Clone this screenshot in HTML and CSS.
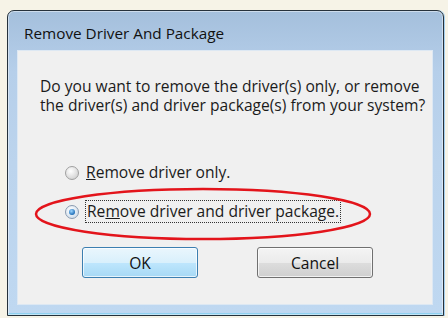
FILE: index.html
```html
<!DOCTYPE html>
<html lang="en">
<head>
  <meta charset="UTF-8">
  <title>Remove Driver And Package</title>
  <link rel="stylesheet" href="styles.css">
</head>
<body>

  <!-- Dialog window -->
  <div class="window">
    <div class="titlebar">Remove Driver And Package</div>

    <div class="client">
      <p class="question">Do you want to remove the driver(s) only, or remove the driver(s) and driver package(s) from your system?</p>

      <div class="options">
        <label class="option">
          <span class="radio"></span>
          <span class="label"><u>R</u>emove driver only.</span>
        </label>
        <label class="option">
          <span class="radio checked"></span>
          <span class="label focus">Re<u>m</u>ove driver and driver package.</span>
        </label>
      </div>

      <div class="buttons">
        <button class="btn default">OK</button>
        <button class="btn">Cancel</button>
      </div>

      <!-- red annotation around the second option -->
      <svg class="mark" width="414" height="252" viewBox="0 0 414 252">
        <ellipse cx="185" cy="163" rx="167" ry="25" fill="none" stroke="#e3141b" stroke-width="2.5"/>
      </svg>
    </div>
  </div>

</body>
</html>
```

FILE: styles.css
```css
body {
  margin: 0;
  padding: 10px 0 0 7px;
  background: #f6f3e7;
  font-family: 'Open Sans', 'Noto Sans', sans-serif;
  color: #1b1b1b;
}

.window {
  box-sizing: border-box;
  width: 437px;
  height: 306px;
  border: 1px solid #26313b;
  border-radius: 7px 7px 0 0;
  background: linear-gradient(#a4bfdc, #b6cfea 20%, #bcd4ed 50%, #bfd8f1);
  box-shadow: inset 0 0 0 1px rgba(255, 255, 255, 0.45), inset 0 -2px 0 #8fd0ef, 1px 0 0 #a6d0f0;
  padding: 0 11px 11px 10px;
  display: flex;
  flex-direction: column;
}

.titlebar {
  box-sizing: border-box;
  height: 40px;
  padding: 5px 0 0 6px;
  line-height: 35px;
  font-size: 15.3px;
  color: #111;
}

.client {
  position: relative;
  flex: 1;
  background: #f0f0f0;
  box-shadow: 0 0 0 1px #dde8f3;
  padding: 0 0 0 22px;
}

.question {
  margin: 26px 0 0;
  font-size: 15.6px;
  line-height: 19px;
  width: 392px;
}

.options {
  margin-top: 47px;
  padding-left: 25px;
  display: flex;
  flex-direction: column;
  gap: 18px;
}

.option {
  display: flex;
  align-items: center;
  gap: 7px;
  font-size: 15.6px;
  height: 21px;
}

.radio {
  box-sizing: border-box;
  flex: none;
  width: 14px;
  height: 14px;
  border-radius: 50%;
  border: 1px solid #a0a0a0;
  background: radial-gradient(circle at 40% 35%, #ffffff, #d8d8d8 70%, #c4c4c4);
  position: relative;
}

.radio.checked {
  border-color: #8a9bb0;
  background: radial-gradient(circle at 40% 35%, #ffffff, #d6e2ee 70%, #c0cfdf);
}

.radio.checked::after {
  content: "";
  position: absolute;
  left: 3px;
  top: 3px;
  width: 6px;
  height: 6px;
  border-radius: 50%;
  background: radial-gradient(circle at 40% 35%, #9fd6ff, #1f6fb8 70%, #0f4c8a);
}

.label {
  line-height: 21px;
}

.label u {
  text-decoration-thickness: 1px;
}

.label.focus {
  outline: 1px dotted #333;
  outline-offset: 0;
  padding: 0 1px;
}

.buttons {
  margin-top: 25px;
  padding-left: 42px;
  display: flex;
  gap: 59px;
}

.btn {
  width: 116px;
  height: 31px;
  border: 1px solid #707070;
  border-radius: 3px;
  background: linear-gradient(#f4f4f4, #ebebeb 50%, #dddddd 51%, #cfcfcf);
  font-family: 'Open Sans', 'Noto Sans', sans-serif;
  font-size: 15.6px;
  color: #111;
  box-shadow: inset 0 0 0 1px rgba(255, 255, 255, 0.7);
}

.btn.default {
  border-color: #3c7fb1;
  background: linear-gradient(#eaf6fd, #d9f0fc 50%, #bee6fd 51%, #a7d9f5);
}

.mark {
  position: absolute;
  left: 0;
  top: 0;
  pointer-events: none;
}
```
